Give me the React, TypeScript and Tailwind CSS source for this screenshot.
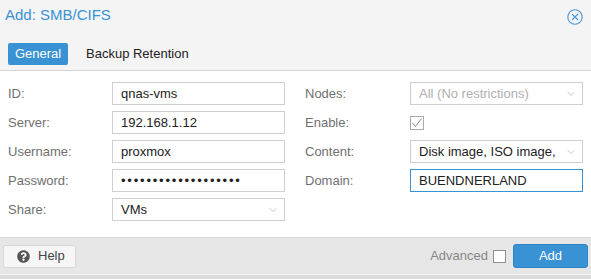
import React from 'react';
import { ChevronDown } from 'lucide-react';
import { FaQuestionCircle } from 'react-icons/fa';

const font = { fontFamily: '"Liberation Sans", Arial, sans-serif' };

const Field: React.FC<{ label: string; children: React.ReactNode; labelWidth: string }> = ({
  label,
  children,
  labelWidth,
}) => (
  <div className="flex items-center h-[23px]">
    <span className={`${labelWidth} shrink-0 text-[13px] text-[#707070]`}>{label}</span>
    {children}
  </div>
);

const TextBox: React.FC<{ value: string; focused?: boolean; width: string }> = ({ value, focused, width }) => (
  <div
    className={`${width} h-[23px] flex items-center px-[8px] bg-white text-[13px] text-[#222] border ${
      focused ? 'border-[#3892d4]' : 'border-[#cfcfcf]'
    }`}
  >
    {value}
  </div>
);

const SelectBox: React.FC<{ value: string; disabled?: boolean; width: string }> = ({ value, disabled, width }) => (
  <div
    className={`${width} h-[23px] flex items-center justify-between pl-[8px] pr-[5px] bg-white text-[13px] border border-[#cfcfcf] ${
      disabled ? 'text-[#b0b0b0]' : 'text-[#222]'
    }`}
  >
    <span className="whitespace-nowrap overflow-hidden">{value}</span>
    <ChevronDown className="w-[12px] h-[12px] shrink-0 text-[#a8a8a8]" strokeWidth={1.3} />
  </div>
);

const App: React.FC = () => {
  return (
    <div className="w-[591px] h-[279px] flex flex-col bg-[#f4f4f4] overflow-hidden" style={font}>
      {/* title bar */}
      <div className="h-[38px] flex items-start justify-between pl-[5px] pr-[8px] pt-[6px]">
        <h1 className="text-[15px] text-[#3892d4] leading-[18px]">Add: SMB/CIFS</h1>
        <svg width="16" height="16" viewBox="0 0 16 16" className="mt-[3px]">
          <circle cx="8" cy="8" r="7.2" fill="none" stroke="#4a95d6" strokeWidth="1.1" />
          <path d="M5 5 L11 11 M11 5 L5 11" stroke="#4a95d6" strokeWidth="1.1" />
        </svg>
      </div>

      {/* tabs */}
      <div className="h-[33px] flex items-start gap-[18px] pl-[8px] pt-[5px] border-b border-[#d4d4d4]">
        <div className="h-[22px] w-[60px] flex items-center justify-center rounded-[2px] bg-[#3892d4] text-white text-[13px]">
          General
        </div>
        <div className="h-[22px] flex items-center text-[13px] text-[#222]">Backup Retention</div>
      </div>

      {/* form */}
      <div className="h-[166px] bg-white flex pt-[11px]">
        <div className="w-[297px] pl-[8px] flex flex-col gap-[6px]">
          <Field label="ID:" labelWidth="w-[104px]">
            <TextBox value="qnas-vms" width="w-[173px]" />
          </Field>
          <Field label="Server:" labelWidth="w-[104px]">
            <TextBox value="192.168.1.12" width="w-[173px]" />
          </Field>
          <Field label="Username:" labelWidth="w-[104px]">
            <TextBox value="proxmox" width="w-[173px]" />
          </Field>
          <Field label="Password:" labelWidth="w-[104px]">
            <div className="w-[173px] h-[23px] flex items-center px-[8px] bg-white border border-[#cfcfcf] text-[13px] text-[#222] tracking-[1.8px]">
              •••••••••••••••••••
            </div>
          </Field>
          <Field label="Share:" labelWidth="w-[104px]">
            <SelectBox value="VMs" width="w-[173px]" />
          </Field>
        </div>
        <div className="pl-[8px] flex flex-col gap-[6px]">
          <Field label="Nodes:" labelWidth="w-[105px]">
            <SelectBox value="All (No restrictions)" disabled width="w-[173px]" />
          </Field>
          <Field label="Enable:" labelWidth="w-[105px]">
            <svg width="14" height="14" viewBox="0 0 14 14">
              <rect x="0.5" y="0.5" width="13" height="13" fill="white" stroke="#a9a9a9" />
              <path d="M2.5 7 L5.5 10.5 L11.5 2.5" fill="none" stroke="#8a8a8a" strokeWidth="1" />
            </svg>
          </Field>
          <Field label="Content:" labelWidth="w-[105px]">
            <SelectBox value="Disk image, ISO image," width="w-[173px]" />
          </Field>
          <Field label="Domain:" labelWidth="w-[105px]">
            <TextBox value="BUENDNERLAND" focused width="w-[173px]" />
          </Field>
        </div>
      </div>

      {/* footer */}
      <div className="h-[37px] bg-[#e6e6e6] border-t border-[#dadada] flex items-center justify-between pl-[3px] pr-[3px]">
        <div className="h-[23px] w-[73px] flex items-center gap-[8px] pl-[13px] rounded-[2px] bg-[#f6f6f6] border border-[#d8d8d8] text-[13px] text-[#444]">
          <FaQuestionCircle className="w-[13px] h-[13px] text-[#555]" />
          Help
        </div>
        <div className="flex items-center">
          <span className="text-[13px] text-[#888]">Advanced</span>
          <div className="ml-[5px] w-[13px] h-[13px] bg-white border border-[#8f8f8f]" />
          <div className="ml-[7px] h-[24px] w-[75px] flex items-center justify-center rounded-[3px] bg-[#3892d4] border border-[#2f84c6] text-white text-[13px]">
            Add
          </div>
        </div>
      </div>
      <div className="flex-1 bg-[#dcdcdc] border-t border-[#f2f2f2]" />
    </div>
  );
};

export default App;
